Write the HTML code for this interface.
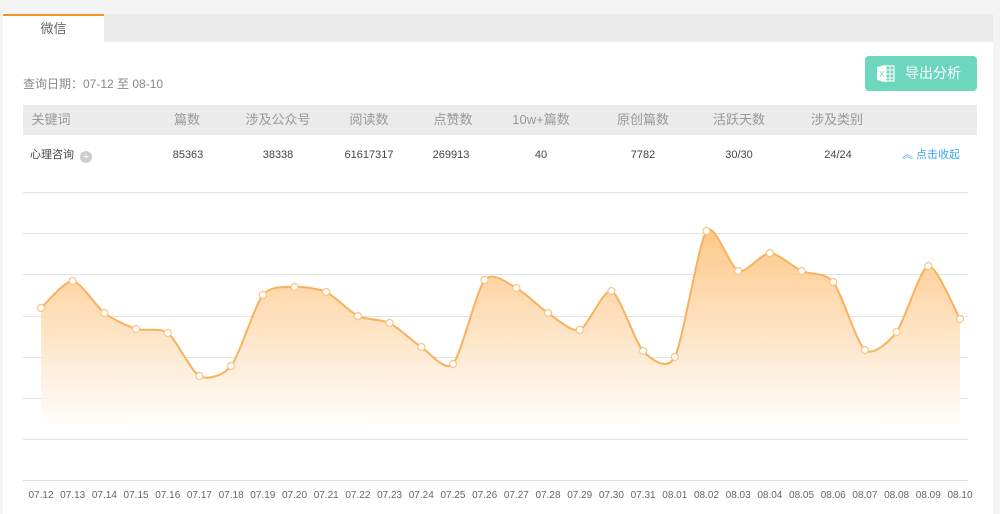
<!DOCTYPE html>
<html><head><meta charset="utf-8"><style>
*{margin:0;padding:0;box-sizing:border-box}
body{width:1000px;height:514px;background:#f4f4f4;font-family:"Liberation Sans","Noto Sans CJK SC",sans-serif;position:relative;overflow:hidden;color:#555}
.main{position:absolute;left:3px;top:14px;width:990px;height:500px;background:#fff}
.tabbar{position:absolute;left:0;top:0;width:990px;height:28px;background:#ebebeb}
.tab{position:absolute;left:0;top:0;width:101px;height:28px;background:#fff;border-top:2px solid #f39325;font-size:13px;color:#666;text-align:center;line-height:25px}
.date{position:absolute;left:20px;top:61px;font-size:12px;color:#888}
.btn{position:absolute;left:862px;top:42px;width:112px;height:35px;background:#6dd7bd;border-radius:4px;color:#fff;font-size:14px;line-height:35px;padding-left:40px}
.xl{position:absolute;left:12px;top:8px;width:18px;height:19px}
.thead{position:absolute;left:20px;top:91px;width:954px;height:30px;background:#ebebeb;font-size:13px;color:#999}
.row{position:absolute;left:20px;top:128px;width:954px;height:26px;font-size:11px;color:#444}
.c{position:absolute;top:0;line-height:30px;transform:translateX(-50%);white-space:nowrap}
.row .c{line-height:26px}
.plus{display:inline-block;width:12px;height:12px;border-radius:50%;background:#ccc;color:#fff;font-size:11px;line-height:12px;text-align:center;margin-left:6px;vertical-align:-2px}
.fold{color:#3aa8e8}
svg{position:absolute;left:0;top:0}
</style></head><body>
<div class="main">
<div class="tabbar"><div class="tab">微信</div></div>
<div class="date">查询日期：07-12 至 08-10</div>
<div class="btn"><svg class="xl" viewBox="0 0 18 19"><rect x="5" y="2" width="12" height="15" fill="none" stroke="#fff" stroke-width="1.2"/><path d="M9 2v15M13 2v15M5 6h12M5 10h12M5 14h12" stroke="#fff" stroke-width="1"/><path d="M0 3l9-2v17l-9-2z" fill="#fff"/><text x="2" y="13" font-size="8" fill="#6dd7bd" font-family="Liberation Sans">X</text></svg>导出分析</div>
<div class="thead">
<span class="c" style="left:28px">关键词</span>
<span class="c" style="left:164px">篇数</span>
<span class="c" style="left:255px">涉及公众号</span>
<span class="c" style="left:346px">阅读数</span>
<span class="c" style="left:430px">点赞数</span>
<span class="c" style="left:518px">10w+篇数</span>
<span class="c" style="left:620px">原创篇数</span>
<span class="c" style="left:716px">活跃天数</span>
<span class="c" style="left:814px">涉及类别</span>
</div>
<div class="row">
<span class="c" style="left:38px">心理咨询<span class="plus">+</span></span>
<span class="c" style="left:165px">85363</span>
<span class="c" style="left:255px">38338</span>
<span class="c" style="left:346px">61617317</span>
<span class="c" style="left:428px">269913</span>
<span class="c" style="left:518px">40</span>
<span class="c" style="left:620px">7782</span>
<span class="c" style="left:716px">30/30</span>
<span class="c" style="left:815px">24/24</span>
<span class="c fold" style="left:908px">︽ 点击收起</span>
</div>
</div>
<svg id="ch" width="1000" height="514"></svg>
<script>
var ys=[308,281,313,329,333,376,366,295,287,292,316,323,347,364,280,288,313,330,291,351,357,231,271,253,271,282,350,332,266,319];
var lbl=["07.12","07.13","07.14","07.15","07.16","07.17","07.18","07.19","07.20","07.21","07.22","07.23","07.24","07.25","07.26","07.27","07.28","07.29","07.30","07.31","08.01","08.02","08.03","08.04","08.05","08.06","08.07","08.08","08.09","08.10"];
var x0=41,dx=(960-41)/29,pts=ys.map(function(y,i){return[x0+i*dx,y]});
var d="M"+pts[0][0]+" "+pts[0][1];
for(var i=0;i<pts.length-1;i++){var p0=pts[Math.max(i-1,0)],p1=pts[i],p2=pts[i+1],p3=pts[Math.min(i+2,pts.length-1)];
var k=8;
var c1=[p1[0]+(p2[0]-p0[0])/k,p1[1]+(p2[1]-p0[1])/k],c2=[p2[0]-(p3[0]-p1[0])/k,p2[1]-(p3[1]-p1[1])/k];
d+=" C"+c1[0].toFixed(1)+" "+c1[1].toFixed(1)+" "+c2[0].toFixed(1)+" "+c2[1].toFixed(1)+" "+p2[0].toFixed(1)+" "+p2[1];}
var s='<defs><linearGradient id="g" x1="0" y1="230" x2="0" y2="430" gradientUnits="userSpaceOnUse"><stop offset="0" stop-color="#fdc27c" stop-opacity="0.9"/><stop offset="1" stop-color="#fff" stop-opacity="0.9"/></linearGradient></defs>';
[192,233,274,316,357,398,439].forEach(function(y){s+='<line x1="23" x2="968" y1="'+y+'.5" y2="'+y+'.5" stroke="#e2e2e2"/>'});
s+='<line x1="23" x2="968" y1="480.5" y2="480.5" stroke="#d8e0ea"/>';
s+='<path d="'+d+' L960 432 L41 432Z" fill="url(#g)"/>';
s+='<path d="'+d+'" fill="none" stroke="#f9b15e" stroke-width="2"/>';
pts.forEach(function(p,i){s+='<circle cx="'+p[0]+'" cy="'+p[1]+'" r="3.5" fill="#fff" stroke="#fbc486" stroke-width="1.2"/>';
s+='<text x="'+p[0]+'" y="498" font-size="10" fill="#666" text-anchor="middle" font-family="Liberation Sans">'+lbl[i]+'</text>'});
document.getElementById('ch').innerHTML=s;
</script>
</body></html>
